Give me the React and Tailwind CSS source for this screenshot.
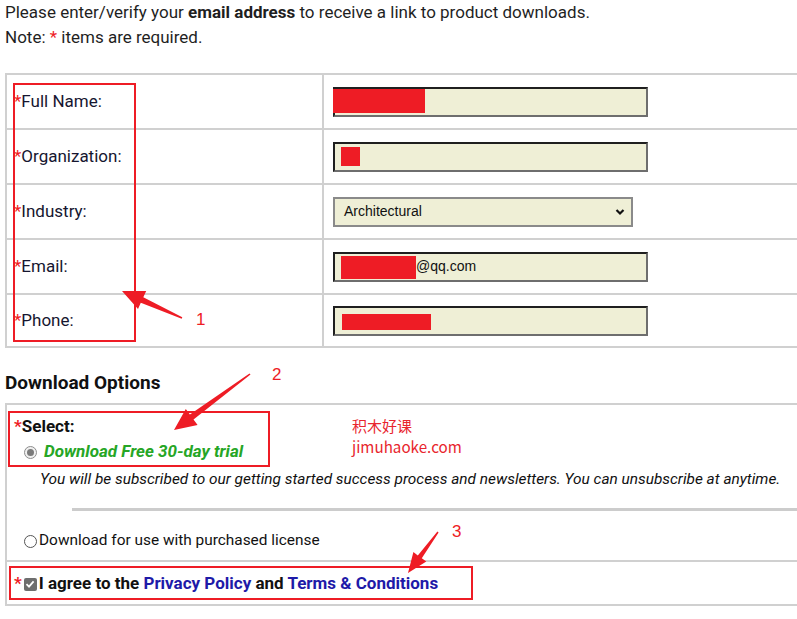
import React from 'react'

const RED = '#ee1c25'

// arrow as a tapered shaft with a triangular head
function arrowPoints(tx, ty, px, py, headLen = 22, headW = 10, shaftW = 3) {
  const dx = px - tx, dy = py - ty
  const len = Math.hypot(dx, dy)
  const ux = dx / len, uy = dy / len
  const nx = -uy, ny = ux
  const bx = px - ux * headLen, by = py - uy * headLen
  const pts = [
    [tx + nx * 0.8, ty + ny * 0.8],
    [bx + nx * shaftW, by + ny * shaftW],
    [bx + nx * headW, by + ny * headW],
    [px, py],
    [bx - nx * headW, by - ny * headW],
    [bx - nx * shaftW, by - ny * shaftW],
    [tx - nx * 0.8, ty - ny * 0.8],
  ]
  return pts.map(p => p.map(v => v.toFixed(1)).join(',')).join(' ')
}

const FIELDS = [
  { label: 'Full Name:', kind: 'name' },
  { label: 'Organization:', kind: 'org' },
  { label: 'Industry:', kind: 'select' },
  { label: 'Email:', kind: 'email' },
  { label: 'Phone:', kind: 'phone' },
]

function TextBox({ children }) {
  return (
    <div className="flex items-center w-[315px] h-[30px] bg-[#efefd6] border-2 border-t-[#1f1f1f] border-l-[#1f1f1f] border-b-[#6e6e6e] border-r-[#6e6e6e] font-['Liberation_Sans',sans-serif] text-[14px] text-[#111]">
      {children}
    </div>
  )
}

function Field({ kind }) {
  if (kind === 'select') {
    return (
      <div className="flex items-center justify-between w-[300px] h-[30px] bg-[#efefd6] border-2 border-[#8a8a8a] pl-[9px] pr-[6px] font-['Liberation_Sans',sans-serif] text-[14px] text-[#111]">
        <span>Architectural</span>
        <svg width="10" height="8" viewBox="0 0 10 8">
          <polyline points="1.5,2 5,5.5 8.5,2" fill="none" stroke="#111" strokeWidth="2.2" />
        </svg>
      </div>
    )
  }
  if (kind === 'name') {
    return (
      <TextBox>
        <span className="self-start -ml-[2px] w-[92px] h-[24px] bg-[#ee1c25]" />
      </TextBox>
    )
  }
  if (kind === 'org') {
    return (
      <TextBox>
        <span className="ml-[6px] w-[19px] h-[19px] bg-[#ee1c25]" />
      </TextBox>
    )
  }
  if (kind === 'email') {
    return (
      <TextBox>
        <span className="ml-[6px] w-[75px] h-[23px] mt-[2px] bg-[#ee1c25]" />
        <span>@qq.com</span>
      </TextBox>
    )
  }
  return (
    <TextBox>
      <span className="ml-[7px] w-[89px] h-[16px] mt-[2px] bg-[#ee1c25]" />
    </TextBox>
  )
}

const Star = () => <span className="text-[#ee1c25]">*</span>

export default function App() {
  return (
    <main className="relative w-[797px] h-[619px] overflow-hidden bg-white font-['Roboto',sans-serif] text-[#1f1f1f]">
      {/* intro */}
      <div className="px-[5px] text-[17px] leading-[25px]">
        <p>Please enter/verify your <b>email address</b> to receive a link to product downloads.</p>
        <p>Note: <Star /> items are required.</p>
      </div>

      {/* contact table */}
      <div className="mt-[23px] ml-[5px] w-[820px] border-2 border-[#d0d0d0]">
        {FIELDS.map((f, i) => (
          <div key={f.label} className={`flex ${i < FIELDS.length - 1 ? 'h-[55px] border-b-2 border-[#d0d0d0]' : 'h-[51px]'}`}>
            <div className="w-[317px] border-r-2 border-[#d0d0d0] flex items-center pl-[7px] text-[17px] text-[#161630]">
              <Star />{f.label}
            </div>
            <div className="flex-1 flex items-center pl-[9px]">
              <Field kind={f.kind} />
            </div>
          </div>
        ))}
      </div>

      {/* download options */}
      <h2 className="mt-[23px] ml-[5px] h-[24px] leading-[24px] text-[19px] font-bold text-[#111]">Download Options</h2>

      <div className="mt-[8px] ml-[5px] w-[820px] border-2 border-[#d0d0d0]">
        <div className="pl-[7px] pb-[8px] pt-[10px] border-b-2 border-[#d0d0d0]">
          <div className="h-[22px] leading-[22px] text-[17px] font-bold text-[#111]"><Star />Select:</div>
          <div className="mt-[2px] h-[26px] flex items-center pl-[10px]">
            <span className="w-[13px] h-[13px] rounded-full border border-[#8d8d8d] bg-[#f0f0f0] flex items-center justify-center">
              <span className="w-[7px] h-[7px] rounded-full bg-[#7a7a7a]" />
            </span>
            <span className="ml-[7px] text-[17px] font-bold italic text-[#26a626]">Download Free 30-day trial</span>
          </div>
          <p className="mt-[3px] pl-[26px] h-[22px] leading-[22px] text-[15.4px] italic text-[#111]">
            You will be subscribed to our getting started success process and newsletters. You can unsubscribe at anytime.
          </p>
          <div className="mt-[18px] ml-[58px] h-[3px] bg-[#cccccc]" />
          <div className="mt-[19px] h-[22px] flex items-center pl-[10px]">
            <span className="w-[13px] h-[13px] rounded-full border border-[#555] bg-white" />
            <span className="ml-[2px] text-[15.4px] text-[#111]">Download for use with purchased license</span>
          </div>
        </div>
        <div className="h-[42px] pt-[2px] flex items-center pl-[7px] text-[17px] font-bold text-[#111]">
          <Star />
          <span className="ml-[2px] mr-[2px] w-[13px] h-[13px] rounded-[2px] bg-[#6e6e6e] flex items-center justify-center">
            <svg width="10" height="10" viewBox="0 0 10 10">
              <polyline points="1.5,5.2 4,7.6 8.6,2.4" fill="none" stroke="#fff" strokeWidth="1.8" />
            </svg>
          </span>
          <span>I agree to the <span className="text-[#1e1aa8]">Privacy Policy</span> and <span className="text-[#1e1aa8]">Terms &amp; Conditions</span></span>
        </div>
      </div>

      {/* watermark */}
      <div className="absolute left-[352px] top-[416px] text-[#e8252d] font-['Noto_Sans_CJK_SC',sans-serif] leading-[20px]">
        <div className="text-[15px]">积木好课</div>
        <div className="text-[15.2px]">jimuhaoke.com</div>
      </div>

      {/* annotations */}
      <div className="absolute left-[13px] top-[83px] w-[123px] h-[259px] border-2 border-[#ee1c25]" />
      <div className="absolute left-[8px] top-[411px] w-[262px] h-[56px] border-2 border-[#ee1c25]" />
      <div className="absolute left-[9px] top-[566px] w-[464px] h-[34px] border-2 border-[#ee1c25]" />
      <svg className="absolute left-0 top-0 pointer-events-none" width="797" height="619">
        <polygon points={arrowPoints(182, 318, 122, 291)} fill={RED} />
        <polygon points={arrowPoints(250, 374, 174, 430)} fill={RED} />
        <polygon points={arrowPoints(438, 532, 408, 573, 20, 8, 2.5)} fill={RED} />
      </svg>
      <span className="absolute left-[196px] top-[307px] text-[17px] text-[#ee1c25] font-['Liberation_Sans',sans-serif]">1</span>
      <span className="absolute left-[272px] top-[362px] text-[17px] text-[#ee1c25] font-['Liberation_Sans',sans-serif]">2</span>
      <span className="absolute left-[452px] top-[519px] text-[17px] text-[#ee1c25] font-['Liberation_Sans',sans-serif]">3</span>
    </main>
  )
}
